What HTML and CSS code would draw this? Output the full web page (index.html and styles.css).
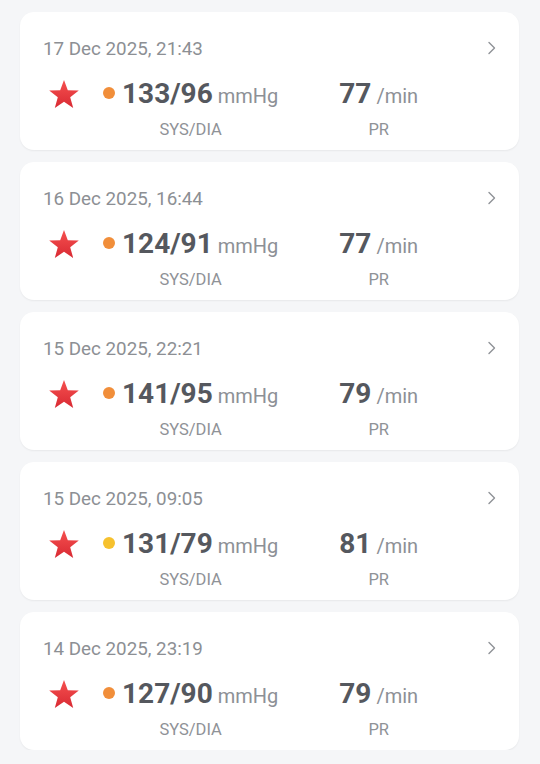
FILE: index.html
```html
<!DOCTYPE html>
<html>
<head>
<meta charset="utf-8">
<link rel="stylesheet" href="styles.css">
</head>
<body>
<div class="list">
  <div class="card">
    <div class="head"><span class="date">17 Dec 2025, 21:43</span><svg class="chev" viewBox="0 0 10 14"><path d="M2 1.5 L7.5 7 L2 12.5"/></svg></div>
    <div class="row">
      <svg class="star" viewBox="0 0 32 31"><defs><linearGradient id="g1" x1="0" y1="0" x2="0" y2="1"><stop offset="0" stop-color="#f5504f"/><stop offset="1" stop-color="#d92a33"/></linearGradient></defs><path fill="url(#g1)" d="M16 1 L19.8 11.2 L30.8 11.5 L22.2 18.3 L25.2 29 L16 22.8 L6.8 29 L9.8 18.3 L1.2 11.5 L12.2 11.2 Z"/></svg>
      <div class="grp bp"><div class="val"><span class="dot orange"></span><span class="num">133/96</span><span class="unit">mmHg</span></div><div class="lbl">SYS/DIA</div></div>
      <div class="grp pr"><div class="val"><span class="num">77</span><span class="unit">/min</span></div><div class="lbl">PR</div></div>
    </div>
  </div>
  <div class="card">
    <div class="head"><span class="date">16 Dec 2025, 16:44</span><svg class="chev" viewBox="0 0 10 14"><path d="M2 1.5 L7.5 7 L2 12.5"/></svg></div>
    <div class="row">
      <svg class="star" viewBox="0 0 32 31"><path fill="url(#g1)" d="M16 1 L19.8 11.2 L30.8 11.5 L22.2 18.3 L25.2 29 L16 22.8 L6.8 29 L9.8 18.3 L1.2 11.5 L12.2 11.2 Z"/></svg>
      <div class="grp bp"><div class="val"><span class="dot orange"></span><span class="num">124/91</span><span class="unit">mmHg</span></div><div class="lbl">SYS/DIA</div></div>
      <div class="grp pr"><div class="val"><span class="num">77</span><span class="unit">/min</span></div><div class="lbl">PR</div></div>
    </div>
  </div>
  <div class="card">
    <div class="head"><span class="date">15 Dec 2025, 22:21</span><svg class="chev" viewBox="0 0 10 14"><path d="M2 1.5 L7.5 7 L2 12.5"/></svg></div>
    <div class="row">
      <svg class="star" viewBox="0 0 32 31"><path fill="url(#g1)" d="M16 1 L19.8 11.2 L30.8 11.5 L22.2 18.3 L25.2 29 L16 22.8 L6.8 29 L9.8 18.3 L1.2 11.5 L12.2 11.2 Z"/></svg>
      <div class="grp bp"><div class="val"><span class="dot orange"></span><span class="num">141/95</span><span class="unit">mmHg</span></div><div class="lbl">SYS/DIA</div></div>
      <div class="grp pr"><div class="val"><span class="num">79</span><span class="unit">/min</span></div><div class="lbl">PR</div></div>
    </div>
  </div>
  <div class="card">
    <div class="head"><span class="date">15 Dec 2025, 09:05</span><svg class="chev" viewBox="0 0 10 14"><path d="M2 1.5 L7.5 7 L2 12.5"/></svg></div>
    <div class="row">
      <svg class="star" viewBox="0 0 32 31"><path fill="url(#g1)" d="M16 1 L19.8 11.2 L30.8 11.5 L22.2 18.3 L25.2 29 L16 22.8 L6.8 29 L9.8 18.3 L1.2 11.5 L12.2 11.2 Z"/></svg>
      <div class="grp bp"><div class="val"><span class="dot yellow"></span><span class="num">131/79</span><span class="unit">mmHg</span></div><div class="lbl">SYS/DIA</div></div>
      <div class="grp pr"><div class="val"><span class="num">81</span><span class="unit">/min</span></div><div class="lbl">PR</div></div>
    </div>
  </div>
  <div class="card">
    <div class="head"><span class="date">14 Dec 2025, 23:19</span><svg class="chev" viewBox="0 0 10 14"><path d="M2 1.5 L7.5 7 L2 12.5"/></svg></div>
    <div class="row">
      <svg class="star" viewBox="0 0 32 31"><path fill="url(#g1)" d="M16 1 L19.8 11.2 L30.8 11.5 L22.2 18.3 L25.2 29 L16 22.8 L6.8 29 L9.8 18.3 L1.2 11.5 L12.2 11.2 Z"/></svg>
      <div class="grp bp"><div class="val"><span class="dot orange"></span><span class="num">127/90</span><span class="unit">mmHg</span></div><div class="lbl">SYS/DIA</div></div>
      <div class="grp pr"><div class="val"><span class="num">79</span><span class="unit">/min</span></div><div class="lbl">PR</div></div>
    </div>
  </div>
</div>
</body>
</html>
```
FILE: styles.css
```css
html, body {
  margin: 0;
  padding: 0;
  background: #f5f6f8;
  font-family: Roboto, "Liberation Sans", sans-serif;
}
.list {
  display: flex;
  flex-direction: column;
  gap: 12px;
  padding: 12px 21px 0 20px;
}
.card {
  background: #fff;
  border-radius: 14px;
  height: 138px;
  box-sizing: border-box;
  padding: 27px 22px 0 23px;
  box-shadow: 0 1px 2px rgba(0,0,0,0.06);
}
.head {
  display: flex;
  align-items: center;
  justify-content: space-between;
  height: 20px;
}
.date {
  font-size: 18.8px;
  color: #8c8f94;
  line-height: 20px;
}
.chev {
  width: 10px;
  height: 14px;
  fill: none;
  stroke: #8f9297;
  stroke-width: 1.4;
  stroke-linecap: round;
  stroke-linejoin: round;
  margin-top: -2px;
}
.row {
  display: flex;
  align-items: flex-start;
  margin-top: 19px;
  padding-left: 5px;
}
.star {
  width: 32px;
  height: 31px;
  margin-top: 1px;
}
.grp {
  display: flex;
  flex-direction: column;
  align-items: center;
}
.bp { margin-left: 23px; }
.pr { margin-left: 61px; }
.val {
  display: flex;
  align-items: baseline;
  height: 32px;
}
.dot {
  width: 12px;
  height: 12px;
  border-radius: 50%;
  margin-right: 7px;
  align-self: center;
  margin-top: -2px;
}
.orange { background: #f18e3a; }
.yellow { background: #f6c12e; }
.num {
  font-size: 28px;
  font-weight: 700;
  color: #55585e;
  line-height: 32px;
}
.unit {
  font-size: 20px;
  color: #8d9096;
  margin-left: 5px;
}
.lbl {
  font-size: 16.5px;
  color: #8f9297;
  margin-top: 11px;
  line-height: 18px;
}
```
